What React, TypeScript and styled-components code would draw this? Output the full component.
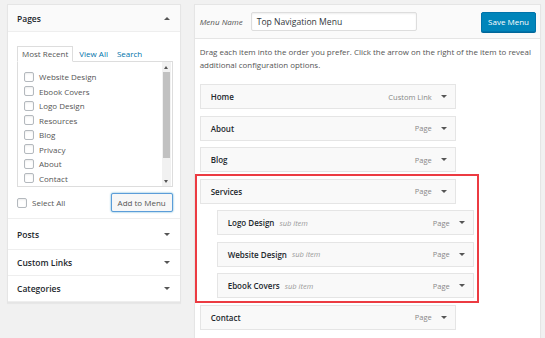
import React from "react";
import styled, { createGlobalStyle } from "styled-components";

const GlobalStyle = createGlobalStyle`
  html, body {
    margin: 0;
    padding: 0;
    background: #f1f1f1;
    font-family: "Open Sans", "Noto Sans", sans-serif;
    color: #444;
  }
  * { box-sizing: border-box; }
`;

const Page = styled.div`
  display: flex;
  align-items: flex-start;
  gap: 13px;
  padding: 4px 4px 0 7px;
  width: 545px;
  height: 338px;
  overflow: hidden;
`;

/* ---------- left column ---------- */

const SidePanel = styled.div`
  width: 174px;
  background: #fff;
  border: 1px solid #e5e5e5;
  box-shadow: 0 1px 1px rgba(0, 0, 0, 0.04);
`;

const SectionHead = styled.div<{ $h: number; $open?: boolean }>`
  height: ${p => p.$h}px;
  display: flex;
  align-items: center;
  justify-content: space-between;
  padding: 0 10px 0 9px;
  font-size: 8.5px;
  font-weight: 600;
  color: #23282d;
  background: ${p => (p.$open ? "#fafafa" : "#fff")};
  border-bottom: 1px solid #eee;
`;

const Caret = styled.span<{ $up?: boolean }>`
  width: 0;
  height: 0;
  border-left: 3px solid transparent;
  border-right: 3px solid transparent;
  ${p => (p.$up ? "border-bottom: 3px solid #555;" : "border-top: 3px solid #555;")}
`;

const PagesBody = styled.div`
  padding: 14px 7px 6px 9px;
  border-bottom: 1px solid #eee;
`;

const Tabs = styled.div`
  display: flex;
  align-items: flex-end;
  gap: 6px;
  height: 16px;
  margin-bottom: -1px;
  position: relative;
`;

const Tab = styled.span<{ $active?: boolean; $gap?: number }>`
  font-size: 8px;
  height: 16px;
  line-height: ${p => (p.$active ? 14 : 16)}px;
  padding: 0 ${p => (p.$active ? 4 : 0)}px;
  margin-left: ${p => p.$gap ?? 0}px;
  color: ${p => (p.$active ? "#555" : "#0073aa")};
  background: ${p => (p.$active ? "#fff" : "transparent")};
  border: ${p => (p.$active ? "1px solid #ddd" : "none")};
  border-bottom-color: #fff;
`;

const TabPanel = styled.div`
  height: 126px;
  border: 1px solid #ddd;
  display: flex;
  background: #fff;
`;

const CheckList = styled.div`
  flex: 1;
  padding: 9px 0 0 6px;
  display: flex;
  flex-direction: column;
  gap: 3.5px;
  overflow: hidden;
`;

const CheckRow = styled.label`
  display: flex;
  align-items: center;
  gap: 5px;
  height: 11px;
  font-size: 8px;
  color: #555;
  white-space: nowrap;
`;

const Box = styled.span`
  width: 10px;
  height: 10px;
  flex: none;
  border: 1px solid #b4b9be;
  border-radius: 2px;
  background: #fff;
  box-shadow: inset 0 1px 2px rgba(0, 0, 0, 0.08);
`;

const Scroll = styled.div`
  width: 9px;
  margin-right: 1px;
  display: flex;
  flex-direction: column;
  align-items: center;
  background: #f1f1f1;
  padding: 4px 0 3px;
`;

const Thumb = styled.div`
  width: 7px;
  height: 86px;
  margin: 3px 0 auto;
  background: #c1c1c1;
`;

const SmallCaret = styled(Caret)`
  border-left-width: 2.5px;
  border-right-width: 2.5px;
`;

const SelectRow = styled.div`
  display: flex;
  align-items: center;
  justify-content: space-between;
  padding: 6px 0 0 0;
`;

const AddBtn = styled.button`
  height: 19px;
  width: 62px;
  padding: 0;
  font-family: inherit;
  font-size: 8px;
  color: #555;
  background: #f7f7f7;
  border: 1px solid #5b9dd9;
  border-radius: 2px;
  box-shadow: 0 0 2px rgba(30, 140, 190, 0.8);
`;

/* ---------- right column ---------- */

const MainPanel = styled.div`
  width: 348px;
  height: 340px;
  background: #fff;
  border: 1px solid #e5e5e5;
  box-shadow: 0 1px 1px rgba(0, 0, 0, 0.04);
`;

const MainHead = styled.div`
  height: 34px;
  display: flex;
  align-items: center;
  padding: 0 4px 0 5px;
  background: #fafafa;
  border-bottom: 1px solid #e5e5e5;
`;

const NameLabel = styled.span`
  font-size: 8px;
  font-style: italic;
  color: #555;
  width: 51px;
`;

const NameInput = styled.div`
  width: 166px;
  height: 19px;
  border: 1px solid #ddd;
  border-radius: 2px;
  background: #fff;
  box-shadow: inset 0 1px 2px rgba(0, 0, 0, 0.07);
  font-size: 8.6px;
  color: #32373c;
  display: flex;
  align-items: center;
  padding-left: 5px;
`;

const SaveBtn = styled.button`
  margin-left: auto;
  height: 20px;
  width: 55px;
  padding: 0;
  font-family: inherit;
  font-size: 8px;
  color: #fff;
  background: #0085ba;
  border: 1px solid #0073aa;
  border-radius: 2px;
  box-shadow: 0 1px 0 #006799;
`;

const MainBody = styled.div`
  padding: 7px 6px 0 5px;
`;

const Help = styled.p`
  margin: 0 0 12px;
  font-size: 7.95px;
  line-height: 13px;
  color: #555;
  white-space: nowrap;
`;

const ItemList = styled.div`
  display: flex;
  flex-direction: column;
  align-items: flex-start;
  gap: 6.5px;
`;

const Highlight = styled.div`
  display: flex;
  flex-direction: column;
  align-items: flex-start;
  gap: 6.5px;
  outline: 2px solid #ec3b42;
  outline-offset: 3px;
`;

const Item = styled.div<{ $sub?: boolean }>`
  height: 25px;
  width: ${p => (p.$sub ? 257 : 256)}px;
  margin-left: ${p => (p.$sub ? 17 : 0)}px;
  display: flex;
  align-items: center;
  padding: 0 8px 0 10px;
  background: #f9f9f9;
  border: 1px solid #e5e5e5;
`;

const ItemTitle = styled.span`
  font-size: 8px;
  font-weight: 600;
  color: #23282d;
`;

const SubNote = styled.span`
  font-size: 7.5px;
  font-style: italic;
  color: #999;
  margin-left: 5px;
`;

const ItemType = styled.span`
  margin-left: auto;
  margin-right: 9px;
  font-size: 7.5px;
  color: #888;
`;

type MenuItem = { title: string; type: string };

const pages = ["Website Design", "Ebook Covers", "Logo Design", "Resources", "Blog", "Privacy", "About", "Contact"];

function Row({ item, sub }: { item: MenuItem; sub?: boolean }) {
  return (
    <Item $sub={sub}>
      <ItemTitle>{item.title}</ItemTitle>
      {sub && <SubNote>sub item</SubNote>}
      <ItemType>{item.type}</ItemType>
      <Caret />
    </Item>
  );
}

export default function App() {
  const top: MenuItem[] = [
    { title: "Home", type: "Custom Link" },
    { title: "About", type: "Page" },
    { title: "Blog", type: "Page" },
  ];
  const subs: MenuItem[] = [
    { title: "Logo Design", type: "Page" },
    { title: "Website Design", type: "Page" },
    { title: "Ebook Covers", type: "Page" },
  ];

  return (
    <>
      <GlobalStyle />
      <Page>
        <SidePanel>
          <SectionHead $h={27} $open>
            Pages
            <Caret $up />
          </SectionHead>
          <PagesBody>
            <Tabs>
              <Tab $active>Most Recent</Tab>
              <Tab>View All</Tab>
              <Tab $gap={3}>Search</Tab>
            </Tabs>
            <TabPanel>
              <CheckList>
                {pages.map(p => (
                  <CheckRow key={p}>
                    <Box />
                    {p}
                  </CheckRow>
                ))}
              </CheckList>
              <Scroll>
                <SmallCaret $up />
                <Thumb />
                <SmallCaret />
              </Scroll>
            </TabPanel>
            <SelectRow>
              <CheckRow>
                <Box />
                Select All
              </CheckRow>
              <AddBtn>Add to Menu</AddBtn>
            </SelectRow>
          </PagesBody>
          <SectionHead $h={31}>
            Posts
            <Caret />
          </SectionHead>
          <SectionHead $h={26}>
            Custom Links
            <Caret />
          </SectionHead>
          <SectionHead $h={26}>
            Categories
            <Caret />
          </SectionHead>
        </SidePanel>

        <MainPanel>
          <MainHead>
            <NameLabel>Menu Name</NameLabel>
            <NameInput>Top Navigation Menu</NameInput>
            <SaveBtn>Save Menu</SaveBtn>
          </MainHead>
          <MainBody>
            <Help>
              Drag each item into the order you prefer. Click the arrow on the right of the item to reveal
              <br />
              additional configuration options.
            </Help>
            <ItemList>
              {top.map(i => (
                <Row key={i.title} item={i} />
              ))}
              <Highlight>
                <Row item={{ title: "Services", type: "Page" }} />
                {subs.map(i => (
                  <Row key={i.title} item={i} sub />
                ))}
              </Highlight>
              <Row item={{ title: "Contact", type: "Page" }} />
            </ItemList>
          </MainBody>
        </MainPanel>
      </Page>
    </>
  );
}
